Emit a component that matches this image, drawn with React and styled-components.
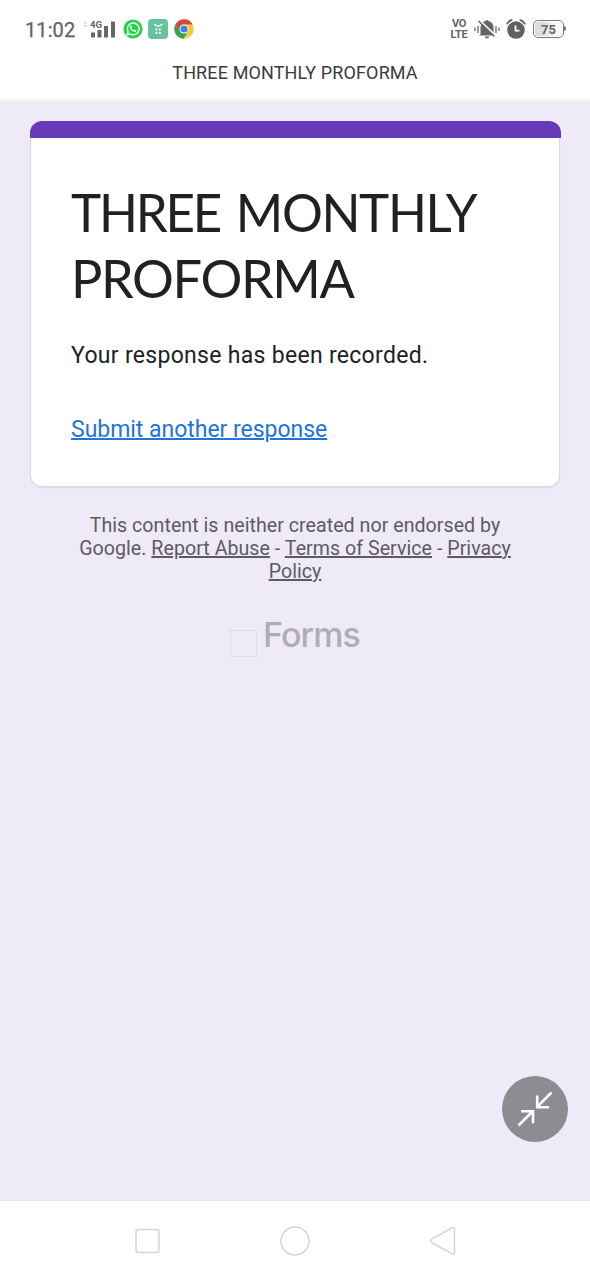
import React from "react";
import styled, { createGlobalStyle } from "styled-components";

const GlobalStyle = createGlobalStyle`
  * { box-sizing: border-box; }
  body { margin: 0; background: #eeeaf8; }
`;

const Screen = styled.div`
  width: 590px;
  height: 1280px;
  display: flex;
  flex-direction: column;
  overflow: hidden;
  background: #eeeaf8;
  font-family: Roboto, "Liberation Sans", sans-serif;
`;

const StatusBar = styled.header`
  height: 58px;
  flex: none;
  display: flex;
  align-items: center;
  justify-content: space-between;
  padding: 0 24px 0 25px;
  background: #fff;
  color: #636363;
`;

const StatusGroup = styled.div`
  display: flex;
  align-items: center;
`;

const Clock = styled.time`
  width: 58px;
  font-size: 20px;
  line-height: 24px;
  letter-spacing: 0.1px;
  padding-top: 1px;
  -webkit-text-stroke: 0.25px #636363;
`;

const Signal = styled.div`
  width: 32px;
  height: 20px;
  margin-right: 8px;
  position: relative;
`;

const NetworkType = styled.span`
  position: absolute;
  left: 7px;
  top: 1px;
  font-size: 9.5px;
  line-height: 10px;
  font-weight: 700;
`;

const StatusIcon = styled.svg`
  display: block;
  flex: none;
  margin-right: ${(p) => p.$gap || 0}px;
`;

const Volte = styled.div`
  width: 20px;
  margin-right: 5px;
  display: flex;
  flex-direction: column;
  align-items: center;
  font-size: 11px;
  line-height: 10.5px;
  font-weight: 700;
  padding-top: 1px;
  letter-spacing: -0.3px;
`;

const Battery = styled.div`
  width: 31px;
  height: 18px;
  margin-right: 2px;
  border: 1.5px solid #777;
  border-radius: 5px;
  padding: 1px;
  position: relative;
  &::after {
    content: "";
    position: absolute;
    right: -3px;
    top: 5px;
    width: 2px;
    height: 5px;
    border-radius: 0 2px 2px 0;
    background: #777;
  }
`;

const BatteryLevel = styled.div`
  height: 100%;
  border-radius: 3px;
  background: linear-gradient(90deg, #dcdcdc 0 30%, #f7f7f7 75%);
  display: flex;
  align-items: center;
  justify-content: center;
  font-size: 13px;
  line-height: 13px;
  font-weight: 700;
  color: #666;
`;

const TitleBar = styled.div`
  height: 44px;
  flex: none;
  background: #fff;
  border-bottom: 1px solid #f8f6fc;
  box-shadow: inset 0 -1px #f0edf6;
  text-align: center;
  color: #3b3b3b;
  font-size: 18px;
  line-height: 30px;
  letter-spacing: 0.13px;
`;

const Page = styled.main`
  flex: 1;
  padding: 19px 29px 0;
`;

const Card = styled.section`
  height: 366px;
  margin: 0 1px;
  border: 1px solid #dcd8e5;
  border-top: 0;
  border-radius: 12px;
  background: #fff;
  box-shadow: 0 1px 1px rgba(80, 70, 110, 0.08);
`;

const CardAccent = styled.div`
  height: 17px;
  margin: 0 -1.5px;
  border-radius: 12px 12px 0 0;
  background: #673ab7;
`;

const CardBody = styled.div`
  padding: 41px 40px 0;
  color: #202124;
`;

const Heading = styled.h1`
  margin: 0;
  font-family: Lato, Roboto, sans-serif;
  font-size: 53px;
  font-weight: 400;
  line-height: 66px;
  letter-spacing: -1.4px;
  white-space: nowrap;
`;

const HeadingLine = styled.span`
  display: block;
  transform: scaleX(${(p) => p.$stretch});
  transform-origin: left;
`;

const FirstWord = styled.span`
  letter-spacing: -2.3px;
  word-spacing: 5px;
`;

const Message = styled.p`
  margin: 30px 0 0;
  font-size: 23px;
  line-height: 30px;
  letter-spacing: 0.3px;
  white-space: nowrap;
`;

const Link = styled.a`
  color: ${(p) => (p.$primary ? "#2274dc" : "inherit")};
  text-decoration: underline;
  text-decoration-thickness: ${(p) => (p.$primary ? "2px" : "1.5px")};
`;

const LinkRow = styled.div`
  margin-top: 44px;
  font-size: 23px;
  line-height: 30px;
  letter-spacing: -0.03px;
`;

const Disclaimer = styled.p`
  margin: 27px 0 0;
  text-align: center;
  color: #5d5a65;
  font-size: 19.6px;
  line-height: 23px;
  letter-spacing: 0.04px;
`;

const Brand = styled.div`
  margin-top: 30px;
  height: 44px;
  display: flex;
  justify-content: center;
  align-items: flex-end;
  gap: 6px;
  color: #b0acb9;
`;

const MissingLogo = styled.span`
  width: 27px;
  height: 27px;
  border: 1px solid #dfdbe8;
`;

const BrandName = styled.span`
  height: 44px;
  font-family: Inter, Roboto, sans-serif;
  font-size: 34px;
  line-height: 44px;
  font-weight: 500;
  letter-spacing: -0.9px;
`;

const ShrinkButton = styled.button`
  position: absolute;
  left: 502px;
  top: 1076px;
  width: 66px;
  height: 66px;
  padding: 0;
  border: 0;
  border-radius: 50%;
  background: #8e8b92;
`;

const NavBar = styled.nav`
  height: 80px;
  flex: none;
  display: flex;
  justify-content: space-between;
  align-items: center;
  padding: 0 132px;
  border-top: 1px solid #e9e7ee;
  background: #fff;
`;

function AppIcons() {
  return (
    <>
      <StatusIcon $gap={5} width="20" height="20" viewBox="0 0 20 20">
        <circle cx="10" cy="10" r="9.6" fill="#25d548" />
        <path d="M4.2 15.8l.9-3.1a5.9 5.9 0 1 1 2.3 2.3z" fill="none" stroke="#fff" strokeWidth="1.4" />
        <path d="M7.6 6.6c.5-.4.9-.2 1.1.3l.5 1.2-.7.9c.6 1.2 1.3 1.9 2.5 2.4l.8-.8 1.5.8c.3.3.1 1-.5 1.4-1 .6-2.6.1-4-1.2S6.300 8.200 7.600 6.600z" fill="#fff" />
      </StatusIcon>
      <StatusIcon $gap={6} width="20" height="20" viewBox="0 0 20 20">
        <rect width="20" height="20" rx="4" fill="#66c39d" />
        <path d="M6 5l2.500 1.800h3.500L14.500 5" fill="none" stroke="#fff" strokeWidth="1.3" />
        <path d="M8.500 9.500v2M11.800 9.500v2M8.500 13v2M11.800 13v2" stroke="#fff" strokeWidth="1.8" />
      </StatusIcon>
      <StatusIcon width="20" height="20" viewBox="0 0 20 20">
        <circle cx="10" cy="10" r="9.7" fill="#f8ca35" />
        <path d="M1.6 5.15A9.7 9.7 0 0 0 9.6 19.7L13.9 12.25 10 10z" fill="#35a35a" />
        <path d="M1.6 5.15A9.7 9.7 0 0 1 18.6 5.5H10A4.5 4.5 0 0 0 5.7 9L5.2 11z" fill="#d64b3e" />
        <circle cx="10" cy="10" r="4.5" fill="#fff" />
        <circle cx="10" cy="10" r="3.6" fill="#3f7ee8" />
      </StatusIcon>
    </>
  );
}

export default function App() {
  return (
    <Screen>
      <GlobalStyle />
      <StatusBar>
        <StatusGroup>
          <Clock>11:02</Clock>
          <Signal>
            <StatusIcon width="32" height="20" viewBox="0 0 32 20">
              <path d="M0.5 4.500L2.500 2.500 4.500 4.500zM0.500 6L2.500 8 4.500 6z" fill="#ccc" />
              <path d="M8 13.500h4v5H8zM14.500 11h4v7.500h-4zM21 7h4v11.500h-4zM28 2.500h4v16h-4z" fill="#666" />
            </StatusIcon>
            <NetworkType>4G</NetworkType>
          </Signal>
          <AppIcons />
        </StatusGroup>
        <StatusGroup>
          <Volte>
            <span>VO</span>
            <span>LTE</span>
          </Volte>
          <StatusIcon $gap={6} width="26" height="20" viewBox="0 0 26 20">
            <path d="M6.500 15.500V9.500C6.500 5 9 2.500 11.500 2c.5-1.300 2.500-1.300 3 0 3 .7 5 3.200 5 6.500v5l2 3H5z" fill="#666" />
            <path d="M10.800 17.500h4.400a2.200 2 0 0 1-4.400 0z" fill="#666" />
            <path d="M6 2L22.500 17.500" stroke="#fff" strokeWidth="2" />
            <path d="M4.500 2L20.500 17.500" stroke="#666" strokeWidth="1.6" />
            <path d="M1 8.500v3.500M4 7v7M22 7v7M25 8.500v3.500" stroke="#777" strokeWidth="1.4" />
          </StatusIcon>
          <StatusIcon $gap={7} width="20" height="20" viewBox="0 0 20 20">
            <circle cx="10" cy="11" r="8.8" fill="#616161" />
            <path d="M.8 5.300Q2.500 1.800 6.300.8M19.200 5.300Q17.500 1.800 13.700.8" fill="none" stroke="#fff" strokeWidth="4" />
            <path d="M.8 5.300Q2.500 1.800 6.300.8M19.200 5.300Q17.500 1.800 13.700.8" fill="none" stroke="#616161" strokeWidth="1.8" />
            <path d="M9.500 6.500v5.200h4" fill="none" stroke="#fff" strokeWidth="1.8" />
          </StatusIcon>
          <Battery><BatteryLevel>75</BatteryLevel></Battery>
        </StatusGroup>
      </StatusBar>
      <TitleBar>THREE MONTHLY PROFORMA</TitleBar>
      <Page>
        <Card>
          <CardAccent />
          <CardBody>
            <Heading>
              <HeadingLine $stretch={0.964}><FirstWord>THREE </FirstWord>MONTHLY</HeadingLine>
              <HeadingLine $stretch={0.987}>PROFORMA</HeadingLine>
            </Heading>
            <Message>Your response has been recorded.</Message>
            <LinkRow><Link $primary>Submit another response</Link></LinkRow>
          </CardBody>
        </Card>
        <Disclaimer>
          This content is neither created nor endorsed by<br />
          Google. <Link>Report Abuse</Link> - <Link>Terms of Service</Link> - <Link>Privacy<br />Policy</Link>
        </Disclaimer>
        <Brand>
          <MissingLogo />
          <BrandName>Forms</BrandName>
        </Brand>
      </Page>
      <NavBar>
        <svg width="30" height="30" viewBox="0 0 30 30" fill="none" stroke="#d5d5d5" strokeWidth="1.5">
          <rect x="4" y="3.500" width="23" height="23" rx="2.5" />
        </svg>
        <svg width="30" height="30" viewBox="0 0 30 30" fill="none" stroke="#d5d5d5" strokeWidth="1.5">
          <circle cx="15" cy="15" r="14" />
        </svg>
        <svg width="30" height="30" viewBox="0 0 30 30" fill="none" stroke="#d5d5d5" strokeWidth="1.5">
          <path d="M3.600 13.200L24 1.800Q26.500.8 26.500 3v23.500q0 2.300-2.500 1.200L3.600 16.500Q1.500 15 3.600 13.200z" />
        </svg>
      </NavBar>
      <ShrinkButton aria-label="Shrink">
        <svg width="66" height="66" viewBox="0 0 66 66" fill="none" stroke="#fff" strokeWidth="2.6">
          <path d="M16.500 49.500L31 35M19 35.200h12v12M49.500 16.500L35 31M35.200 19.500v11.800H47" />
        </svg>
      </ShrinkButton>
    </Screen>
  );
}
